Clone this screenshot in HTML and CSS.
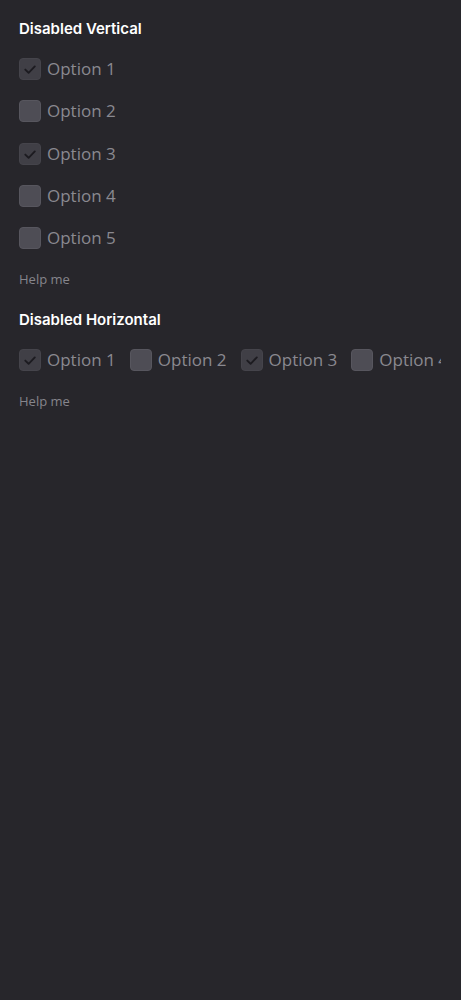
FILE: index.html
```html
<!DOCTYPE html>
<html>
<head>
<meta charset="utf-8">
<link rel="stylesheet" href="styles.css">
</head>
<body>
<div class="page">
  <section class="group">
    <h2 class="title">Disabled Vertical</h2>
    <div class="list vertical">
      <label class="opt"><span class="box checked"><svg viewBox="0 0 22 22"><path d="M6.3 11.6l3.3 3.2 6.2-6.4"/></svg></span><span class="text">Option 1</span></label>
      <label class="opt"><span class="box"></span><span class="text">Option 2</span></label>
      <label class="opt"><span class="box checked"><svg viewBox="0 0 22 22"><path d="M6.3 11.6l3.3 3.2 6.2-6.4"/></svg></span><span class="text">Option 3</span></label>
      <label class="opt"><span class="box"></span><span class="text">Option 4</span></label>
      <label class="opt"><span class="box"></span><span class="text">Option 5</span></label>
    </div>
    <p class="help">Help me</p>
  </section>
  <section class="group">
    <h2 class="title">Disabled Horizontal</h2>
    <div class="list horizontal">
      <label class="opt"><span class="box checked"><svg viewBox="0 0 22 22"><path d="M6.3 11.6l3.3 3.2 6.2-6.4"/></svg></span><span class="text">Option 1</span></label>
      <label class="opt"><span class="box"></span><span class="text">Option 2</span></label>
      <label class="opt"><span class="box checked"><svg viewBox="0 0 22 22"><path d="M6.3 11.6l3.3 3.2 6.2-6.4"/></svg></span><span class="text">Option 3</span></label>
      <label class="opt"><span class="box"></span><span class="text">Option 4</span></label>
      <label class="opt"><span class="box"></span><span class="text">Option 5</span></label>
    </div>
    <p class="help">Help me</p>
  </section>
</div>
</body>
</html>
```
FILE: styles.css
```css
html, body {
  margin: 0;
  padding: 0;
  background: #27262b;
  height: 100%;
}
body {
  font-family: "Open Sans", "Liberation Sans", sans-serif;
}
.page {
  padding: 18px 20px 0 19px;
}
.group {
  margin-bottom: 21px;
}
.title {
  margin: 0;
  font-family: "Inter", sans-serif;
  font-weight: 600;
  font-size: 15px;
  line-height: 22px;
  color: #ffffff;
}
.list {
  margin-top: 18px;
}
.list.vertical {
  display: flex;
  flex-direction: column;
  gap: 20.3px;
}
.list.horizontal {
  display: flex;
  flex-wrap: nowrap;
  gap: 14px;
  overflow: hidden;
  margin-top: 18px;
}
.opt {
  display: flex;
  align-items: center;
  gap: 6px;
  flex-shrink: 0;
  height: 22px;
}
.box {
  width: 22px;
  height: 22px;
  box-sizing: border-box;
  border-radius: 4px;
  background: #4e4d55;
  border: 1px solid #57565e;
  display: flex;
  align-items: center;
  justify-content: center;
}
.box.checked {
  background: #403f46;
  border-color: #45444b;
}
.box svg {
  width: 22px;
  height: 22px;
  flex-shrink: 0;
  fill: none;
  stroke: #1c1b20;
  stroke-width: 1.9;
  stroke-linecap: round;
  stroke-linejoin: round;
}
.text {
  font-size: 17px;
  color: #8a8990;
  line-height: 22px;
  white-space: nowrap;
}
.help {
  margin: 21px 0 0 0;
  font-size: 13px;
  line-height: 18px;
  color: #86858c;
}
```
